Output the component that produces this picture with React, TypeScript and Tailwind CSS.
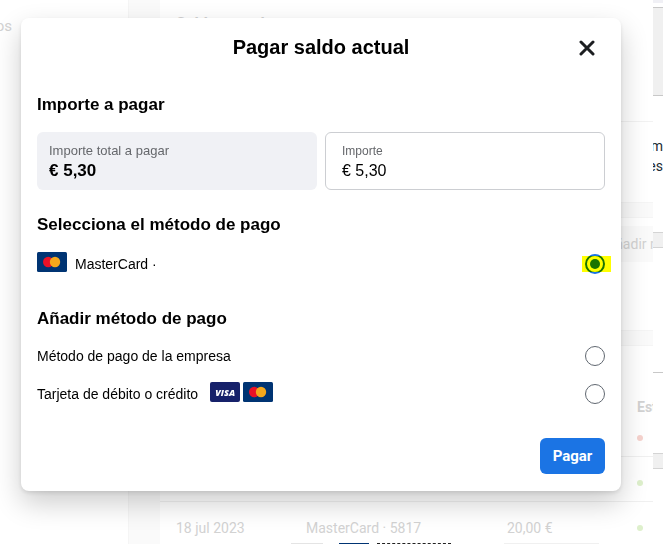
import { useState } from 'react';

interface Movement {
  date: string;
  method: string;
  amount: string;
  dot: string;
}

const movements: Movement[] = [
  { date: '20 jul 2023', method: 'MasterCard · 5817', amount: '5,30 €', dot: 'bg-[#f6d3ce]' },
  { date: '19 jul 2023', method: 'MasterCard · 5817', amount: '20,00 €', dot: 'bg-[#def0cc]' },
  { date: '18 jul 2023', method: 'MasterCard · 5817', amount: '20,00 €', dot: 'bg-[#def0cc]' },
];

const MasterCardLogo = () => (
  <svg className="w-[30px] h-5 shrink-0" viewBox="0 0 30 20" aria-hidden="true">
    <rect width="30" height="20" rx="1.5" fill="#003473" />
    <circle cx="11.2" cy="10" r="5.2" fill="#eb1126" />
    <circle cx="18" cy="10" r="5.2" fill="#f5a81c" />
  </svg>
);

const VisaLogo = () => (
  <span className="w-[30px] h-5 shrink-0 rounded-xs bg-[#16216a] text-white flex items-center justify-center font-['Open_Sans'] font-extrabold italic text-[9px] leading-none">
    VISA
  </span>
);

interface MethodRowProps {
  id: string;
  selected: string;
  onSelect: (id: string) => void;
  highlighted?: boolean;
  children: React.ReactNode;
}

const MethodRow: React.FC<MethodRowProps> = ({ id, selected, onSelect, highlighted, children }) => (
  <div className={`flex items-center justify-between ${highlighted ? 'h-[42px]' : 'h-[38px]'}`}>
    <label htmlFor={id} className="flex items-center text-sm leading-5">
      {children}
    </label>
    <span className="relative flex">
      <input
        id={id}
        type="radio"
        name="method"
        checked={selected === id}
        onChange={() => onSelect(id)}
        className="appearance-none w-5 h-5 rounded-full border border-[#606770] bg-white checked:border-2 checked:border-[#1b74e4] checked:p-[3px] checked:bg-clip-content checked:bg-[#1b74e4]"
      />
      {highlighted && (
        <span className="absolute inset-y-[2px] -left-[3px] -right-[6px] bg-[#ffff00] mix-blend-multiply pointer-events-none"></span>
      )}
    </span>
  </div>
);

// Faded billing page that stays behind the dialog
const BillingPage = () => (
  <div className="h-full flex font-[Roboto,sans-serif] text-sm text-[#d2d2d2]">
    <div className="w-32 shrink-0 pt-4 text-[15px] leading-5">
      <div className="w-3 flex justify-end">os</div>
    </div>
    <div className="w-8 shrink-0 bg-[#fafafa] border-l border-[#f5f5f5]"></div>

    <div className="flex-1 min-w-0 overflow-hidden">
      <div className="h-[122px] pl-4 pt-[14px] border-b border-[#f2f2f2] text-base leading-5 font-bold">Saldo actual</div>
      <div className="h-20"></div>
      <div className="h-4 bg-[#fafafa] border-y border-[#f5f5f5]"></div>
      <div className="h-28 pt-2">
        <div className="h-9 bg-[#fafafa] flex items-center justify-end">
          <span className="w-[47px] overflow-hidden whitespace-nowrap">Añadir método</span>
        </div>
      </div>
      <div className="h-4 bg-[#fafafa] border-y border-[#f5f5f5]"></div>

      <table className="w-full table-fixed text-left mt-[47px]">
        <thead>
          <tr className="h-7">
            <th className="w-[146px] pl-4">Fecha</th>
            <th className="w-[201px]">Método</th>
            <th className="w-[130px]">Importe</th>
            <th className="overflow-hidden">Estado</th>
          </tr>
        </thead>
        <tbody>
          {movements.map((m, i) => (
            <tr key={m.date} className={`border-b border-[#f0f0f0] ${i === 0 ? 'h-[35px]' : 'h-[45px] *:pt-2'}`}>
              <td className="pl-4">{m.date}</td>
              <td>{m.method}</td>
              <td>{m.amount}</td>
              <td><span className={`block w-[6px] h-[6px] rounded-full ${m.dot}`}></span></td>
            </tr>
          ))}
        </tbody>
      </table>
    </div>

    {/* Right edge panel */}
    <div className="relative z-20 w-[10px] shrink-0 overflow-hidden bg-white text-[#1c2b33]">
      <div className="h-[3px] bg-[#f0f0f5]"></div>
      <div className="h-[89px] mt-1 bg-[#f0f0f0] border-y border-[#c8c8c8]"></div>
      <div className="h-[136px] pt-10 leading-5">
        <div className="flex justify-end">m</div>
        <div className="flex justify-end">es</div>
      </div>
      <div className="h-4 bg-[#f0f0f0] border-y border-[#d4d4d4]"></div>
      <div className="h-[125px] border-b border-[#c8c8c8]"></div>
      <div className="h-20"></div>
      <div className="h-4 bg-[#f0f0f0] border-y border-[#d4d4d4]"></div>
    </div>
  </div>
);

export default function App() {
  const [selected, setSelected] = useState('saved');
  const [amount, setAmount] = useState('€ 5,30');

  return (
    <div className="relative h-screen overflow-hidden bg-white">
      <BillingPage />

      {/* Edge of the next card */}
      <div className="absolute bottom-0 left-[291px] h-px overflow-hidden flex items-start">
        <div className="w-8 h-px bg-[#e4e4e4]"></div>
        <div className="w-[30px] h-px ml-4 bg-[#003473]"></div>
        <div className="w-[74px] h-px ml-2 border-t border-dashed border-[#222222]"></div>
        <div className="w-[95px] h-px ml-[53px] bg-[#f0f0f0]"></div>
      </div>

      <div
        role="dialog"
        aria-labelledby="dialog-title"
        className="absolute top-[18px] left-[21px] right-[42px] max-w-[600px] z-10 bg-white rounded-lg px-4 pb-[17px] font-['Liberation_Sans',Arial,sans-serif] text-black shadow-[0_12px_28px_rgba(0,0,0,0.2),0_2px_4px_rgba(0,0,0,0.1)]"
      >
        <header className="relative h-[58px] flex items-center justify-center">
          <h1 id="dialog-title" className="text-xl leading-6 font-bold">Pagar saldo actual</h1>
          <button aria-label="Cerrar" className="absolute right-0 top-3 w-9 h-9 flex items-center justify-center">
            <svg className="w-4 h-4" fill="none" viewBox="0 0 16 16" stroke="#1c1e21"><path strokeLinecap="round" strokeWidth={3} d="M2 2l12 12M14 2L2 14" /></svg>
          </button>
        </header>

        <section className="pt-[19px]">
          <h2 className="text-[17px] leading-5 font-bold">Importe a pagar</h2>
          <div className="grid grid-cols-2 gap-2 mt-[17px]">
            <div className="h-[58px] rounded-md bg-[#f0f1f5] px-3 pt-[9px]">
              <div className="text-[13px] leading-5 text-[#65676b]">Importe total a pagar</div>
              <div className="text-[17px] leading-5 font-bold">{amount}</div>
            </div>
            <div className="h-[58px] rounded-md border border-[#ccced2] px-4 pt-2">
              <label htmlFor="amount" className="block text-xs leading-5 text-[#65676b]">Importe</label>
              <input
                id="amount"
                value={amount}
                onChange={(e) => setAmount(e.target.value)}
                className="block w-full h-5 text-base leading-5 outline-none"
              />
            </div>
          </div>
        </section>

        <section className="mt-[25px]">
          <h2 className="text-[17px] leading-5 font-bold mb-2">Selecciona el método de pago</h2>
          <MethodRow id="saved" selected={selected} onSelect={setSelected} highlighted>
            <span className="mb-1 mr-2"><MasterCardLogo /></span>
            MasterCard ·
          </MethodRow>
        </section>

        <section className="mt-6">
          <h2 className="text-[17px] leading-5 font-bold mb-2">Añadir método de pago</h2>
          <MethodRow id="company" selected={selected} onSelect={setSelected}>
            Método de pago de la empresa
          </MethodRow>
          <MethodRow id="card" selected={selected} onSelect={setSelected}>
            Tarjeta de débito o crédito
            <span className="flex gap-[3px] mb-1 ml-3">
              <VisaLogo />
              <MasterCardLogo />
            </span>
          </MethodRow>
        </section>

        <footer className="flex justify-end mt-[25px]">
          <button className="h-9 min-w-[65px] px-3 rounded-md bg-[#1b74e4] text-white font-[Roboto,sans-serif] font-bold text-[15px] leading-5">Pagar</button>
        </footer>
      </div>
    </div>
  );
}
